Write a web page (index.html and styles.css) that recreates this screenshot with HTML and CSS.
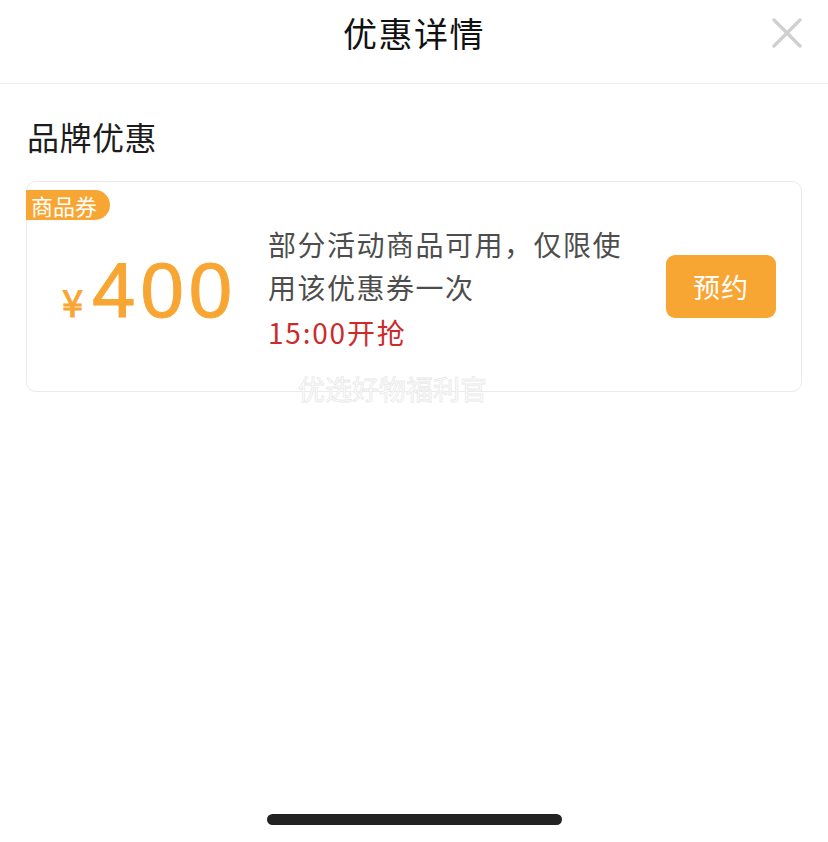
FILE: index.html
```html
<!DOCTYPE html>
<html lang="zh-CN">
<head>
<meta charset="utf-8">
<title>优惠详情</title>
<link rel="stylesheet" href="styles.css">
</head>
<body>
<div class="page">
  <header class="header">
    <span></span>
    <h1 class="title">优惠详情</h1>
    <button class="close" aria-label="关闭">
      <svg width="30" height="30" viewBox="0 0 30 30"><path d="M2 2 L28 28 M28 2 L2 28" stroke="#cfcfcf" stroke-width="3.2" stroke-linecap="round" fill="none"/></svg>
    </button>
  </header>
  <h2 class="section-title">品牌优惠</h2>
  <div class="card">
    <span class="badge">商品券</span>
    <div class="price"><span class="yen">¥</span><span class="amount">400</span></div>
    <div class="desc">
      <p class="desc-text">部分活动商品可用，仅限使用该优惠券一次</p>
      <p class="time">15:00开抢</p>
    </div>
    <button class="reserve">预约</button>
    <span class="watermark">优选好物福利官</span>
  </div>
  <div class="home-indicator"></div>
</div>
</body>
</html>
```
FILE: styles.css
```css
* { box-sizing: border-box; }
html, body { margin: 0; padding: 0; background: #fff; }
body {
  font-family: "Noto Sans CJK SC", "Noto Sans", sans-serif;
  color: #1a1a1a;
}
.page {
  width: 828px;
  min-height: 842px;
  display: flex;
  flex-direction: column;
}
.header {
  height: 84px;
  border-bottom: 1px solid #ececec;
  display: grid;
  grid-template-columns: 1fr auto 1fr;
  align-items: start;
}
.title {
  margin: 0;
  font-size: 34px;
  font-weight: 400;
  line-height: 66px;
  color: #111;
  letter-spacing: 1.5px;
}
.close {
  justify-self: end;
  margin: 18px 26px 0 0;
  padding: 0;
  border: 0;
  background: none;
  width: 30px;
  height: 30px;
  display: block;
}
.close svg { display: block; }
.section-title {
  margin: 30px 0 0 27px;
  font-size: 32px;
  font-weight: 400;
  line-height: 44px;
  color: #1c1c1c;
  letter-spacing: 0.5px;
}
.card {
  position: relative;
  margin: 23px 0 0 26px;
  width: 776px;
  height: 211px;
  border: 1px solid #ebebeb;
  border-radius: 10px;
  display: flex;
  align-items: center;
}
.badge {
  position: absolute;
  left: -1px;
  top: 8px;
  height: 30px;
  padding: 0 13px 0 5px;
  background: #f8a633;
  color: #fff;
  font-size: 22px;
  line-height: 30px;
  border-radius: 0 15px 15px 0;
}
.price {
  width: 241px;
  padding-left: 35px;
  padding-top: 6px;
  color: #f8a633;
  display: flex;
  align-items: baseline;
  font-family: "Liberation Sans", "Noto Sans", sans-serif;
}
.yen {
  font-size: 38px;
  margin-right: 9px;
  -webkit-text-stroke: 1px #f8a633;
  font-family: "Noto Sans CJK SC", sans-serif;
}
.amount {
  font-size: 78px;
  line-height: 80px;
  letter-spacing: 5px;
  -webkit-text-stroke: 1px #f8a633;
}
.desc {
  width: 370px;
  padding-top: 4px;
}
.desc-text {
  margin: 0;
  font-size: 28px;
  line-height: 43px;
  letter-spacing: 1.5px;
  color: #4d4d4d;
}
.time {
  margin: 2px 0 0;
  font-size: 28px;
  line-height: 43px;
  color: #cc2b2b;
  letter-spacing: 1.8px;
}
.reserve {
  margin-left: 28px;
  width: 110px;
  height: 63px;
  border: 0;
  border-radius: 9px;
  background: #f8a633;
  color: #fff;
  font-family: "Noto Sans CJK SC", sans-serif;
  font-size: 27px;
  letter-spacing: 1px;
  padding: 0;
}
.watermark {
  position: absolute;
  left: 271px;
  top: 192px;
  font-size: 27px;
  line-height: 30px;
  color: #fff;
  -webkit-text-stroke: 0.8px #e8e8e8;
  white-space: nowrap;
}
.home-indicator {
  margin: auto auto 17px;
  width: 295px;
  height: 11px;
  border-radius: 6px;
  background: #222;
}
```
